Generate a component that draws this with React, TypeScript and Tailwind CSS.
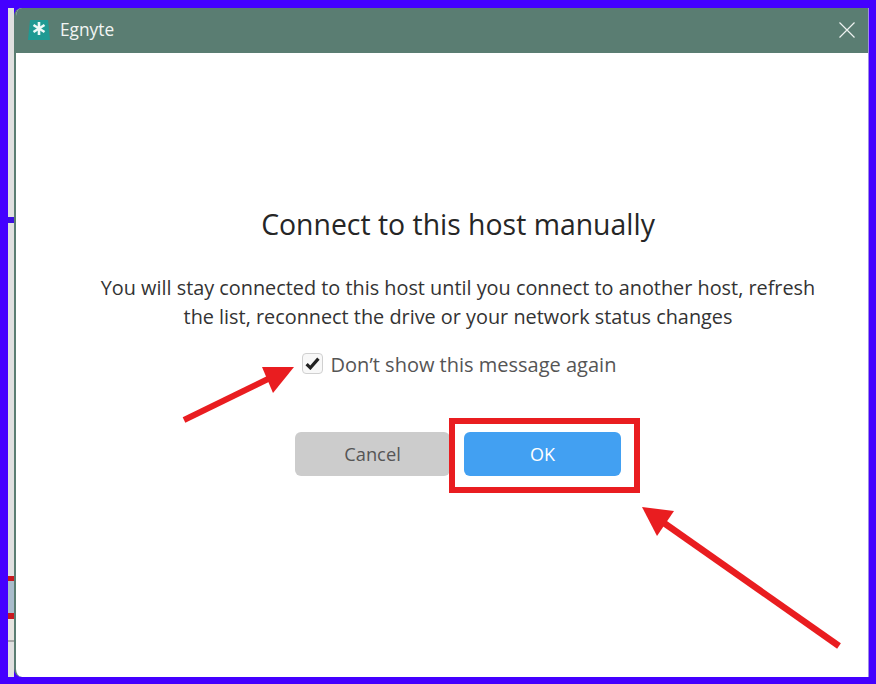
import React from 'react';

const font = { fontFamily: '"Open Sans", "Noto Sans", sans-serif' };

// annotation arrows drawn on top of the screenshot
const Arrows = () => (
  <svg className="absolute left-0 top-0 pointer-events-none" width="876" height="684">
    <line x1="184" y1="420" x2="272" y2="377" stroke="#e91d20" strokeWidth="6" />
    <polygon points="294,367 262,367 273,393" fill="#e91d20" />
    <line x1="839" y1="646" x2="664" y2="523" stroke="#e91d20" strokeWidth="6.5" />
    <polygon points="642,507 674,511 657,536" fill="#e91d20" />
  </svg>
);

const EgnyteLogo = () => (
  <svg width="22" height="22" viewBox="0 0 22 22">
    <polygon points="2,0 20,0 22,20 0,20" fill="#1f9a93" />
    <g stroke="#eefaf8" strokeWidth="2.6" strokeLinecap="butt">
      <line x1="11" y1="2" x2="11" y2="15" />
      <line x1="5.5" y1="5" x2="16.5" y2="12" />
      <line x1="16.5" y1="5" x2="5.5" y2="12" />
    </g>
  </svg>
);

export default function App() {
  return (
    <div
      className="relative w-[876px] h-[684px] overflow-hidden flex bg-[#4400ff] pt-2 pl-2 pr-[7px] pb-[7px]"
      style={font}
    >
      <div className="w-[6px] h-full bg-[#e0e0e0] flex flex-col">
        <div className="h-[209px]" />
        <div className="h-[6px] bg-[#3f10e0]" />
        <div className="h-[353px]" />
        <div className="h-[5px] bg-[#c8181f]" />
        <div className="h-[32px] bg-[#a9bccb]" />
        <div className="h-[6px] bg-[#c8181f]" />
        <div className="h-[21px] bg-[#e6e4e0]" />
        <div className="h-[2px] bg-[#a8a8a8]" />
      </div>
      <div className="flex-1 flex flex-col border-l-2 border-[#5a7d72] rounded-tl-lg rounded-bl-lg border-r border-r-[#a08ce6] overflow-hidden bg-white">
        <div className="h-[45px] bg-[#5a7d72] flex items-center text-white pl-3 pr-[13px]">
          <EgnyteLogo />
          <span className="ml-[10px] text-[17.3px] leading-[22px] -mt-px text-[#f2f5f4]">Egnyte</span>
          <svg className="ml-auto -mt-[2px]" width="16" height="16" viewBox="0 0 16 16">
            <path d="M0.5 0.5 L15.5 15.5 M15.5 0.5 L0.5 15.5" stroke="#eef2f0" strokeWidth="1.2" fill="none" />
          </svg>
        </div>
        <div className="flex-1 flex flex-col items-center pl-8 pt-[152px] text-[#333333]">
          <h1 className="text-[28.4px] leading-[38px] text-[#262626] whitespace-nowrap">Connect to this host manually</h1>
          <p className="mt-[30px] text-[19.85px] leading-[29px] text-center whitespace-nowrap">
            You will stay connected to this host until you connect to another host, refresh
            <br />
            the list, reconnect the drive or your network status changes
          </p>
          <label className="mt-[24px] pl-[2px] flex items-center gap-2 h-[20px] text-[20px] text-[#555555]">
            <span className="-mt-1 w-[21px] h-[21px] rounded-[4px] border border-[#d0d0d0] bg-[#f8f8f8] flex items-center justify-center">
              <svg width="15" height="13" viewBox="0 0 14 12">
                <path d="M1.5 6.5 L5 10 L12.5 1.5" stroke="#222222" strokeWidth="3" fill="none" />
              </svg>
            </span>
            <span className="whitespace-nowrap">Don’t show this message again</span>
          </label>
          <div className="mt-[57px] flex gap-[14px]">
            <button className="w-[155px] h-[44px] rounded-md bg-[#cccccc] text-[18.3px] text-[#555555]">Cancel</button>
            <button className="w-[157px] h-[44px] rounded-md bg-[#42a0f2] text-[18px] text-white">OK</button>
          </div>
        </div>
      </div>
      <div className="absolute left-[449px] top-[418px] w-[191px] h-[75px] border-[6px] border-[#e91d20]" />
      <Arrows />
    </div>
  );
}
